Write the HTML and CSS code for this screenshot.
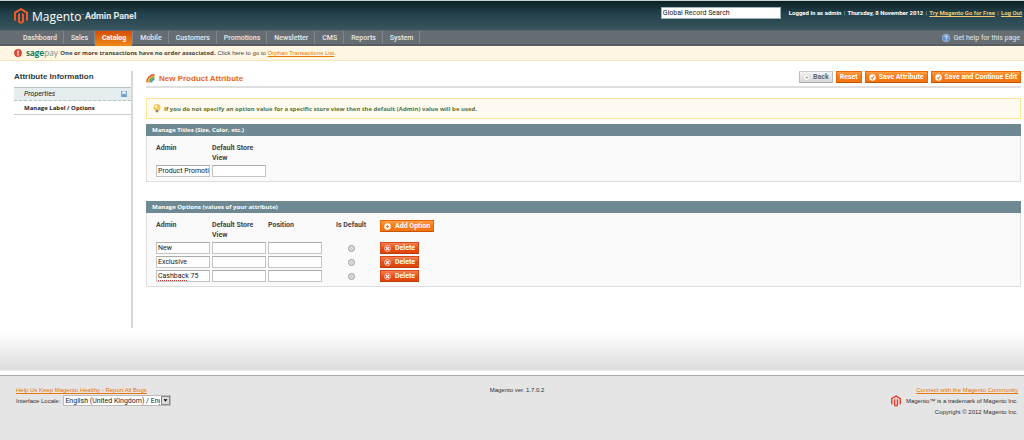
FILE: index.html
```html
<!DOCTYPE html>
<html lang="en">
<head>
<meta charset="utf-8">
<title>New Product Attribute - Magento Admin</title>
<link rel="stylesheet" href="styles.css">
</head>
<body>
<svg class="sprite" aria-hidden="true">
  <symbol id="magento" viewBox="0 0 28 32"><path d="M14 0 28 8v16l-4 2.400V10.400L14 4.600 4 10.400v16L0 24V8z"/><path d="M8 12.500 12 10v16.500l2 1.200 2-1.200V10l4 2.500v16L14 32l-6-3.500z"/></symbol>
  <symbol id="check" viewBox="0 0 14 14"><circle cx="7" cy="7" r="6.500" fill="#fff"/><path d="M4 7l2.500 2.800L10.500 4" fill="none" stroke="#f37a16" stroke-width="2.200"/></symbol>
  <symbol id="cross" viewBox="0 0 14 14"><circle cx="7" cy="7" r="5.800" fill="#e5532a" stroke="#ffd9c9" stroke-width="1.800"/><path d="M4.500 4.500l5 5m0-5l-5 5" stroke="#fff" stroke-width="2.200"/></symbol>
</svg>

<header class="header">
  <a class="brand" href="#">
    <svg class="brand-mark"><use href="#magento"/></svg>
    <span class="brand-name">Magento<span class="brand-tm">™</span></span>
    <span class="brand-sub">Admin Panel</span>
  </a>
  <div class="header-right">
    <input class="search" type="text" value="Global Record Search" aria-label="Global Record Search">
    <div class="account">
      <span>Logged in as admin</span><i>|</i><span>Thursday, 8 November 2012</span><i>|</i><a href="#">Try Magento Go for Free</a><i>|</i><a href="#">Log Out</a>
    </div>
  </div>
</header>

<nav class="nav">
  <ul class="nav-list">
    <li><a href="#">Dashboard</a></li>
    <li><a href="#">Sales</a></li>
    <li><a class="active" href="#">Catalog</a></li>
    <li><a href="#">Mobile</a></li>
    <li><a href="#">Customers</a></li>
    <li><a href="#">Promotions</a></li>
    <li><a href="#">Newsletter</a></li>
    <li><a href="#">CMS</a></li>
    <li><a href="#">Reports</a></li>
    <li><a href="#">System</a></li>
  </ul>
  <a class="help" href="#">
    <svg class="icon-8" viewBox="0 0 16 16"><circle cx="8" cy="8" r="7.500" fill="#5f8fd0" stroke="#c5dbf5"/><path d="M5.500 6.200c0-3.600 5.200-3.300 5.200-.3C10.700 8 8 7.800 8 10m0 1.300v2" fill="none" stroke="#fff" stroke-width="1.900"/></svg>
    Get help for this page
  </a>
</nav>

<div class="alert">
  <svg class="icon-8" viewBox="0 0 16 16"><circle cx="8" cy="8" r="7.800" fill="#dd4a33"/><path d="M8 3v6m0 1.500V13" stroke="#fff" stroke-width="2.600"/></svg>
  <span class="sage"><b>sage</b>pay</span>
  <strong>One or more transactions have no order associated.</strong>
  <span>Click here to go to <a class="link" href="#">Orphan Transactions List</a>.</span>
</div>

<div class="layout">
  <aside class="side">
    <h2>Attribute Information</h2>
    <ul class="tabs">
      <li><a class="tab changed" href="#">Properties
        <svg class="icon-6" viewBox="0 0 12 12"><path d="M.700.700h10.600v10.600H.700z" fill="#b9d3ee" stroke="#5583ba" stroke-width="1.400"/><path d="M3 1h6v3.500H3z" fill="#fff"/><path d="M2.500 6.500h7V11h-7z" fill="#6d97c8"/></svg></a></li>
      <li><a class="tab current" href="#">Manage Label / Options</a></li>
    </ul>
  </aside>

  <main class="main">
    <div class="title-bar">
      <h1>
        <svg class="rainbow" viewBox="0 0 18 18" fill="none" stroke-width="3.200"><path d="M1.800 17C1.800 8 8 1.800 17 1.800" stroke="#e2523b"/><path d="M4.800 17C4.800 10 10 4.800 17 4.800" stroke="#f3b13c"/><path d="M7.800 17C7.800 11.500 11.500 7.800 17 7.800" stroke="#6cb84a"/><path d="M10.800 17c0-3.500 2.700-6.200 6.200-6.200" stroke="#5590d0"/></svg>
        New Product Attribute
      </h1>
      <div class="actions">
        <button class="btn back" type="button"><svg class="icon-7" viewBox="0 0 14 14"><circle cx="7" cy="7" r="6" fill="#fff" stroke="#bbb"/><path d="M9 4 4.500 7 9 10z" fill="#999"/></svg>Back</button>
        <button class="btn" type="button">Reset</button>
        <button class="btn" type="button"><svg class="icon-7"><use href="#check"/></svg>Save Attribute</button>
        <button class="btn" type="button"><svg class="icon-7"><use href="#check"/></svg>Save and Continue Edit</button>
      </div>
    </div>

    <p class="tip">
      <svg class="bulb" viewBox="0 0 16 18"><circle cx="8" cy="7" r="6.500" fill="#f6c95c" stroke="#e5b65a"/><circle cx="6" cy="5" r="2.500" fill="#fff3c4"/><path d="M5.500 12h5v4.500h-5z" fill="#8c8375"/></svg>
      If you do not specify an option value for a specific store view then the default (Admin) value will be used.
    </p>

    <section class="panel">
      <h3>Manage Titles (Size, Color, etc.)</h3>
      <div class="panel-body">
        <table class="grid">
          <thead><tr><th>Admin</th><th>Default Store View</th></tr></thead>
          <tbody><tr>
            <td><input class="field" type="text" value="Product Promotions" aria-label="Admin title"></td>
            <td><input class="field" type="text" aria-label="Default Store View title"></td>
          </tr></tbody>
        </table>
      </div>
    </section>

    <section class="panel options">
      <h3>Manage Options (values of your attribute)</h3>
      <div class="panel-body">
        <table class="grid">
          <thead><tr>
            <th>Admin</th><th>Default Store View</th><th>Position</th><th class="center">Is Default</th>
            <th class="action"><button class="btn" type="button"><svg class="icon-7" viewBox="0 0 14 14"><circle cx="7" cy="7" r="6.500" fill="#fff"/><path d="M7 3.500v7M3.500 7h7" stroke="#f37a16" stroke-width="2.400"/></svg>Add Option</button></th>
          </tr></thead>
          <tbody>
            <tr>
              <td><input class="field" type="text" value="New" aria-label="Option 1 admin"></td>
              <td><input class="field" type="text" aria-label="Option 1 store view"></td>
              <td><input class="field" type="text" aria-label="Option 1 position"></td>
              <td class="center"><input class="radio" type="radio" name="default" aria-label="Option 1 is default"></td>
              <td class="action"><button class="btn delete" type="button"><svg class="icon-7"><use href="#cross"/></svg>Delete</button></td>
            </tr>
            <tr>
              <td><input class="field" type="text" value="Exclusive" aria-label="Option 2 admin"></td>
              <td><input class="field" type="text" aria-label="Option 2 store view"></td>
              <td><input class="field" type="text" aria-label="Option 2 position"></td>
              <td class="center"><input class="radio" type="radio" name="default" aria-label="Option 2 is default"></td>
              <td class="action"><button class="btn delete" type="button"><svg class="icon-7"><use href="#cross"/></svg>Delete</button></td>
            </tr>
            <tr>
              <td class="misspelt"><input class="field" type="text" value="Cashback 75" aria-label="Option 3 admin"></td>
              <td><input class="field" type="text" aria-label="Option 3 store view"></td>
              <td><input class="field" type="text" aria-label="Option 3 position"></td>
              <td class="center"><input class="radio" type="radio" name="default" aria-label="Option 3 is default"></td>
              <td class="action"><button class="btn delete" type="button"><svg class="icon-7"><use href="#cross"/></svg>Delete</button></td>
            </tr>
          </tbody>
        </table>
      </div>
    </section>
  </main>
</div>

<div class="fade"></div>

<footer class="footer">
  <div>
    <a class="link" href="#">Help Us Keep Magento Healthy - Report All Bugs</a>
    <div class="locale">
      <label for="locale">Interface Locale:</label>
      <span class="select">
        <select id="locale"><option>English (United Kingdom) / English</option></select>
        <svg class="arrow" viewBox="0 0 9 9"><path d="M2 3h5L4.500 6z"/></svg>
      </span>
    </div>
  </div>
  <div class="version">Magento ver. 1.7.0.2</div>
  <div class="legal">
    <a class="link" href="#">Connect with the Magento Community</a>
    <div class="trademark"><svg class="legal-mark"><use href="#magento"/></svg>Magento™ is a trademark of Magento Inc.</div>
    <div>Copyright © 2012 Magento Inc.</div>
  </div>
</footer>
</body>
</html>
```
FILE: styles.css
```css
* { box-sizing: border-box; }
body {
  margin: 0;
  min-height: 100vh;
  display: flex;
  flex-direction: column;
  background: #fff;
  color: #2f2f2f;
  font: 6px/10px "Liberation Sans", Arial, sans-serif;
}
h1, h2, h3, p, ul { margin: 0; padding: 0; }
ul { list-style: none; }
svg { flex: none; display: block; }
button, input, select { font-family: inherit; margin: 0; }
.sprite { display: none; }
.icon-8 { width: 8px; height: 8px; }
.icon-7 { width: 7px; height: 7px; }
.icon-6 { width: 6px; height: 6px; }
.link { color: #ea7601; text-decoration: underline; }

/* Header */
.header {
  display: flex;
  align-items: center;
  justify-content: space-between;
  height: 30px;
  padding: 0 2px 0 14px;
  border-top: 1px solid #c8d0d0;
  background: linear-gradient(#0c2024, #24424b 45%, #385560);
}
.brand { display: flex; align-items: center; color: #fff; text-decoration: none; line-height: 18px; }
.brand-mark { width: 14px; height: 16px; margin-right: 4px; fill: #f1592a; }
.brand-name { margin-right: 1px; font-family: "Open Sans", sans-serif; font-size: 12px; }
.brand-tm { font-size: 3px; vertical-align: 5px; }
.brand-sub { font-family: Roboto, sans-serif; font-size: 9px; font-weight: bold; color: #e3eaec; }
.header-right { display: flex; align-items: center; gap: 8px; padding-bottom: 5px; }
.search { width: 120px; height: 12px; padding: 0 1px; border: 1px solid #9fb0b5; background: #fff; color: #222; font: 7px Roboto, sans-serif; }
.account { display: flex; color: #fff; font-family: Roboto, sans-serif; font-weight: bold; }
.account i { width: 6px; text-align: center; font-style: normal; font-weight: normal; color: #a9b8bc; }
.account a { color: #f0c872; }

/* Navigation */
.nav {
  display: flex;
  justify-content: space-between;
  height: 16px;
  padding: 0 4px 0 14px;
  background: #666e73;
  border-top: 1px solid #59686e;
  border-bottom: 2px solid #575f63;
  font: 500 7px/14px Roboto, sans-serif;
}
.nav-list { display: flex; }
.nav-list li { border-right: 1px solid #7f878b; }
.nav-list a { display: block; padding: 0 6px 0 7px; color: #e6e9eb; text-decoration: none; }
.nav-list li:first-child a { padding-left: 9px; }
.nav-list .active { height: 15px; background: linear-gradient(#d84c05, #ee8a18); color: #fff; font-weight: bold; }
.help { display: flex; align-items: center; gap: 3px; color: #e2e6e8; text-decoration: none; font-weight: normal; }

/* Alert */
.alert {
  display: flex;
  align-items: center;
  gap: 2px;
  height: 15px;
  padding: 0 14px;
  background: #fff7e4;
  border-bottom: 1px solid #f3e6b4;
  color: #444;
}
.alert strong, .tip, .panel h3, .current { font-family: "Open Sans", sans-serif; font-size: 6px; font-weight: bold; }
th, .btn { font-family: Roboto, sans-serif; font-size: 7px; font-weight: bold; }
.sage { padding-left: 2px; color: #8b9794; font: 9px/12px Lato, sans-serif; }
.sage b { color: #138064; font-weight: 900; }

/* Columns */
.layout { display: grid; grid-template-columns: 119px 1fr; gap: 13px; padding: 10px 3px 0 14px; }
.side { min-height: 257px; border-right: 2px solid #d8d8d8; }
.side h2 { height: 16px; font-size: 8px; line-height: 12px; color: #303b40; }
.tabs { border-top: 1px solid #b7c2c4; }
.tab { display: flex; align-items: center; justify-content: space-between; height: 13px; padding: 0 4px 0 10px; color: #222; text-decoration: none; }
.changed { background: #e5eeee; border-bottom: 1px dashed #b4c3c5; font-family: Roboto, sans-serif; font-size: 7px; font-style: italic; }
.current { height: 14px; border-bottom: 1px solid #c7cccc; }

/* Title bar */
.title-bar { display: flex; justify-content: space-between; align-items: flex-start; height: 17px; border-bottom: 2px solid #dfdfdf; }
h1 { display: flex; align-items: center; gap: 4px; font-size: 8px; line-height: 15px; color: #e8641b; }
.rainbow { width: 9px; height: 9px; }
.actions { display: flex; gap: 3px; }
.btn {
  display: inline-flex;
  align-items: center;
  gap: 4px;
  height: 12px;
  padding: 0 3px;
  border: 1px solid #ed6502;
  border-bottom-color: #c65300;
  background: linear-gradient(#ffa24a, #f77c16 40%, #f47410);
  color: #fff;
  line-height: 10px;
  vertical-align: top;
}
.actions .btn { gap: 3px; }
.back { border-color: #ccc #bbb #aaa; background: linear-gradient(#f4f4f4, #d8d8d8); color: #666; }
.delete { border-color: #d64a18; border-bottom-color: #b83a0c; background: linear-gradient(#f58258, #e64f16 50%, #e3450b); }

/* Tip */
.tip {
  display: flex;
  align-items: center;
  gap: 3px;
  height: 21px;
  margin: 10px 0 5px;
  padding: 0 6px;
  border: 1px solid #fde69a;
  background: #fffbf0;
  color: #5f7331;
}
.bulb { width: 8px; height: 9px; }

/* Panels */
.panel h3 { height: 12px; padding: 0 6px; background: #6f8992; color: #fff; line-height: 12px; }
.panel-body { padding: 5px 7px 2px; border: 1px solid #dedede; border-top: 0; background: #fafafa; }
.options { margin-top: 19px; }
.grid { border-spacing: 2px; table-layout: fixed; }
th, td { width: 54px; padding: 0; text-align: left; vertical-align: top; }
th { height: 20px; line-height: 10px; color: #444; }
.center { width: 54px; text-align: center; }
.action { width: 60px; line-height: 0; }
.field { display: block; width: 54px; height: 12px; padding: 0 0 0 1px; border: 1px solid #c4c4c4; border-top-color: #aaa; background: #fff; color: #222; font: 7px Roboto, sans-serif; }
.misspelt { position: relative; }
.misspelt::after { content: ""; position: absolute; left: 2px; bottom: 1px; width: 29px; border-bottom: 1px dotted #e03030; }
.radio { display: block; appearance: none; width: 7px; height: 7px; margin: 3px auto 0; border: 1px solid #999; border-radius: 50%; background: radial-gradient(#c8c8c8, #f2f2f2); }

/* Footer */
.fade { height: 47px; margin-top: auto; background: linear-gradient(#fff, #fff 4px, #dcdcdc 42px, #fff 43px); }
.footer {
  display: grid;
  grid-template-columns: 1fr 1fr 1fr;
  flex: none;
  min-height: 65px;
  padding: 9px 6px 0 16px;
  border-top: 1px solid #a8a8a8;
  background: #e5e5e5;
}
.locale { display: flex; align-items: center; gap: 3px; }
.select { position: relative; width: 108px; }
.select select { display: block; appearance: none; width: 100%; height: 11px; padding: 0 10px 0 1px; border: 1px solid #bbb; border-radius: 0; background: #fff; color: #222; font: 7px Roboto, sans-serif; }
.arrow { position: absolute; right: 1px; top: 1px; width: 9px; height: 9px; border: 1px solid #888; background: #ddd; pointer-events: none; }
.version { text-align: center; }
.legal { text-align: right; }
.trademark { display: flex; align-items: center; justify-content: flex-end; gap: 5px; height: 12px; }
.legal-mark { width: 10px; height: 12px; fill: #e8402c; }
```
